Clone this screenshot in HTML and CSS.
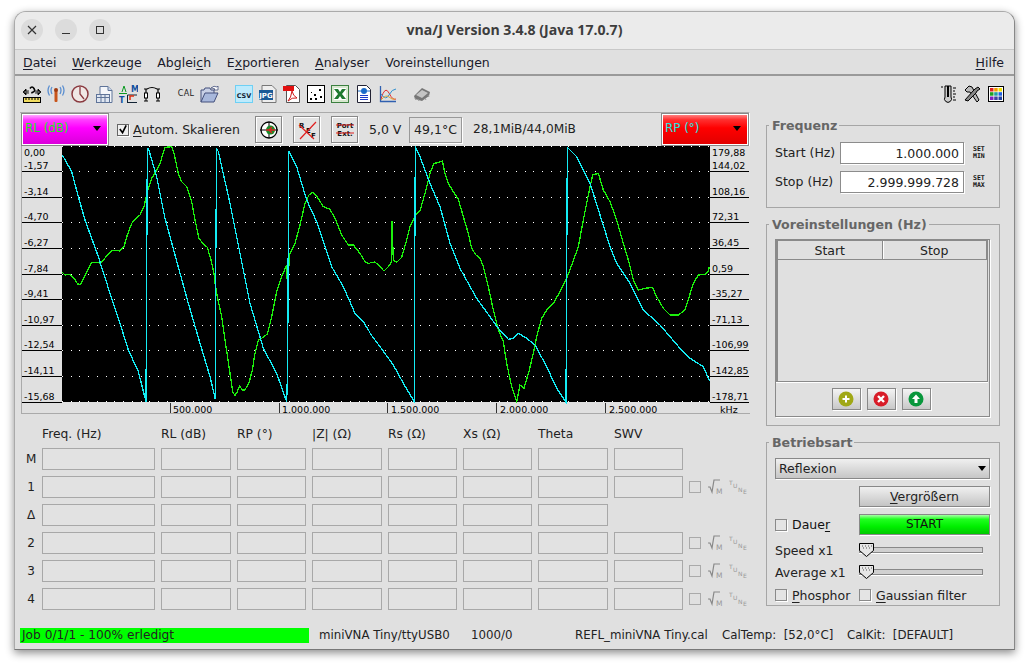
FILE: index.html
```html
<!DOCTYPE html>
<html lang="de">
<head>
<meta charset="utf-8">
<title>vna/J</title>
<link rel="stylesheet" href="styles.css">
</head>
<body>
<div class="window">
  <header class="titlebar">
    <div class="controls">
      <span class="ctl"><svg width="12" height="12" viewBox="0 0 12 12"><path d="M2 2l8 8M10 2l-8 8" stroke="#333" stroke-width="1.2"/></svg></span>
      <span class="ctl"><svg width="12" height="12" viewBox="0 0 12 12"><path d="M2 9.5h8" stroke="#333" stroke-width="1.2"/></svg></span>
      <span class="ctl"><svg width="12" height="12" viewBox="0 0 12 12"><rect x="2.5" y="2.5" width="7" height="7" fill="none" stroke="#333"/></svg></span>
    </div>
    <div class="title">vna/J Version 3.4.8 (Java 17.0.7)</div>
  </header>
  <nav class="menubar">
    <span class="menu"><u>D</u>atei</span>
    <span class="menu"><u>W</u>erkzeuge</span>
    <span class="menu">Abglei<u>c</u>h</span>
    <span class="menu">E<u>x</u>portieren</span>
    <span class="menu"><u>A</u>nalyser</span>
    <span class="menu">Voreinstellungen</span>
    <span class="menu help"><u>H</u>ilfe</span>
  </nav>
  <div class="toolbar">
    <span class="tool"><svg width="20" height="20" viewBox="0 0 20 20"><path d="M1 8l3-3v2h3M1 8l3 3V9h3M19 8l-3-3v2h-3M19 8l-3 3V9h-3" fill="#000" stroke="#000" stroke-width=".8"/><path d="M8 4.500q2-3 4 0t-2 4v1" fill="none" stroke="#000" stroke-width="1.6"/><rect x="1.500" y="13.500" width="17" height="5" fill="#f0dc60" stroke="#000"/><path d="M4 14v2M7 14v2M10 14v2M13 14v2M16 14v2" stroke="#000"/></svg></span>
    <span class="tool"><svg width="20" height="20" viewBox="0 0 20 20"><rect x="8.500" y="6" width="3" height="12" rx="1" fill="#c8541a"/><circle cx="10" cy="6" r="2" fill="#a03a10"/><path d="M6 3q-2 3 0 7M14 3q2 3 0 7M3.500 1.500q-3 5 0 10M16.500 1.500q3 5 0 10" fill="none" stroke="#5b8fd0" stroke-width="1.300"/></svg></span>
    <span class="tool"><svg width="20" height="20" viewBox="0 0 20 20"><circle cx="10" cy="10" r="8" fill="#f0e8e6" stroke="#8a3a40" stroke-width="1.500"/><path d="M10 3v7l4 5" fill="none" stroke="#8a3a40" stroke-width="1.300"/></svg></span>
    <span class="tool"><svg width="20" height="20" viewBox="0 0 20 20"><path d="M6 2.500h8l4 4v12H6z" fill="#f4f6fa" stroke="#5f7499"/><path d="M14 2.500v4h4" fill="#c8d4e6" stroke="#5f7499"/><rect x="2.500" y="10.500" width="13" height="8" fill="#dfe6f1" stroke="#5f7499"/><path d="M2.500 13.500h13M7 10.500v8M11 10.500v8" stroke="#5f7499"/></svg></span>
    <span class="tool"><svg width="20" height="20" viewBox="0 0 20 20"><path d="M4 8l2-6 2 6" fill="none" stroke="#0a9a20"/><path d="M1 9.500h8" stroke="#0a9a20"/><text x="13" y="8" class="lmt lmt-m">M</text><text x="1" y="19" class="lmt lmt-m">T</text><path d="M9.500 19V11H19M9.500 18.500H19" fill="none" stroke="#123"/><path d="M12 16v-4h4" fill="none" stroke="#e03010" stroke-width="1.500"/></svg></span>
    <span class="tool"><svg width="20" height="20" viewBox="0 0 20 20"><path d="M2 5h3M15 5h3M5 5q5-3 10 0" fill="none" stroke="#000" stroke-width="1.200"/><path d="M4 5v4M16 5v4" stroke="#000" stroke-width="1.200"/><rect x="2.500" y="9" width="3" height="5" fill="#fff" stroke="#000"/><rect x="14.500" y="9" width="3" height="5" fill="#fff" stroke="#000"/><path d="M4 14v3M16 14v3M2 17h4M14 17h4" stroke="#000"/></svg></span>
    <span class="spacer"></span>
    <span class="tool cal">CAL</span>
    <span class="tool"><svg width="22" height="20" viewBox="0 0 22 20"><path d="M2 18V6h3l1-2h5l1 2h3v3" fill="#c8d0e6" stroke="#44507c"/><path d="M2 18l4-9h13l-4 9z" fill="#a8b8dc" stroke="#44507c"/><path d="M12 4q3-3 6-1l1-1v4h-4l1-1q-2-1-4-1" fill="#fff" stroke="#44507c" stroke-width=".8"/></svg></span>
    <span class="spacer"></span>
    <span class="tool"><svg width="18" height="18" viewBox="0 0 18 18"><rect width="18" height="18" fill="#6ed0f4"/><rect x="1" y="1" width="16" height="16" fill="#bdeafc"/><text x="9" y="12.500" class="mini">CSV</text></svg></span>
    <span class="tool"><svg width="18" height="18" viewBox="0 0 18 18"><path d="M3 .5h10l4 4v13H3z" fill="#eee" stroke="#777"/><rect x="0" y="5" width="14" height="10" fill="#1a5a96"/><text x="7" y="13" class="mini mini-w">JPG</text></svg></span>
    <span class="tool"><svg width="18" height="18" viewBox="0 0 18 18"><path d="M3.500.5h9l4 4v13h-13z" fill="#fff" stroke="#555"/><rect x="0" y="1" width="11" height="5" fill="#e21010"/><path d="M5 16q3-3 4-10q1 5 5 7q-5-1-9 3z" fill="none" stroke="#d01818"/></svg></span>
    <span class="tool"><svg width="18" height="18" viewBox="0 0 18 18"><rect x=".5" y=".5" width="17" height="17" fill="#fff" stroke="#000"/><path d="M3 13h2v2H3zM7 9h2v2H7zM8 13h2v2H8zM12 4h2v2h-2zM13 11h2v2h-2zM4 7h1v1H4z" fill="#000"/></svg></span>
    <span class="tool"><svg width="18" height="18" viewBox="0 0 18 18"><rect x=".5" y=".5" width="17" height="17" fill="#d8e8d0" stroke="#3c8040"/><rect x="3" y="3" width="12" height="12" fill="#fff"/><path d="M3 4l4 0 2 3 2-3 4 0-4 5 4 5h-4l-2-3-2 3H3l4-5z" fill="#1f7a30"/></svg></span>
    <span class="tool"><svg width="18" height="18" viewBox="0 0 18 18"><path d="M2.500.5h9l4 4v13h-13z" fill="#fff" stroke="#223"/><circle cx="9" cy="6" r="3" fill="#1a6ac8"/><path d="M3 6h3M12 6h3" stroke="#1a6ac8"/><path d="M5 10.500h8M5 12.500h8M5 14.500h8" stroke="#1a3ac8"/></svg></span>
    <span class="tool"><svg width="18" height="18" viewBox="0 0 18 18"><path d="M1.500 1v15.500H17" fill="none" stroke="#3060b0" stroke-width="1.300"/><path d="M2 14q4-14 8-6t7 6" fill="none" stroke="#e03030"/><path d="M2 9q5 7 8 1t7-6" fill="none" stroke="#3090d0"/><path d="M2 15q5-6 8-3t6 2" fill="none" stroke="#e0a030"/></svg></span>
    <span class="spacer"></span>
    <span class="tool"><svg width="20" height="16" viewBox="0 0 20 16"><path d="M2 10l8-8 8 4-1 4-7 5-7-2z" fill="#777"/><path d="M4 9l6-5 6 3-6 5z" fill="#c4c4c4"/><path d="M3 12l1 2M6 13l1 2M13 12l1 2M16 9l1 2" stroke="#999"/></svg></span>
    <span class="tools-right">
      <span class="tool"><svg width="18" height="18" viewBox="0 0 18 18"><path d="M6 1h6v11a3.500 3.500 0 1 1-6 0z" fill="#ccc" stroke="#000"/><path d="M9 1v11" stroke="#000" stroke-width="2"/><path d="M2 2h2M14 3h3M14 6h2M14 9h3M14 12h2M14 15h3" stroke="#000"/></svg></span>
      <span class="tool"><svg width="18" height="18" viewBox="0 0 18 18"><path d="M2 5l4-4 3 1 7 13-2 2L7 7 4 7z" fill="#bbb" stroke="#000"/><path d="M15 2l2 2-3 2-1 2-8 8-3-1 8-9 2-2z" fill="#888" stroke="#000"/></svg></span>
      <span class="tool"><svg width="16" height="16" viewBox="0 0 16 16"><rect x=".5" y=".5" width="15" height="15" fill="#fff" stroke="#000"/><rect x="2" y="2" width="3.500" height="3.500" fill="#e02020"/><rect x="6.200" y="2" width="3.500" height="3.500" fill="#f0a000"/><rect x="10.500" y="2" width="3.500" height="3.500" fill="#f0e000"/><rect x="2" y="6.200" width="3.500" height="3.500" fill="#20a020"/><rect x="6.200" y="6.200" width="3.500" height="3.500" fill="#20a0a0"/><rect x="10.500" y="6.200" width="3.500" height="3.500" fill="#2060e0"/><rect x="2" y="10.500" width="3.500" height="3.500" fill="#8020c0"/><rect x="6.200" y="10.500" width="3.500" height="3.500" fill="#4040a0"/><rect x="10.500" y="10.500" width="3.500" height="3.500" fill="#2040a0"/></svg></span>
    </span>
  </div>

  <div class="main">
    <section class="left">
      <div class="graphbar">
        <div class="combo combo-mag"><span>RL (dB)</span><i class="arrow"></i></div>
        <label class="check autom"><span class="box on"><svg width="11" height="11" viewBox="0 0 11 11"><path d="M2 5l3 4 4-8" fill="none" stroke="#000" stroke-width="1.800"/></svg></span><span><u>A</u>utom. Skalieren</span></label>
        <span class="gbtn"><svg width="20" height="20" viewBox="0 0 20 20"><circle cx="10" cy="10" r="8" fill="#fff" stroke="#000" stroke-width="1.300"/><path d="M1 10h18M10 2v16" stroke="#000"/><circle cx="11.500" cy="10" r="4.500" fill="#1a8a2a"/><path d="M7 10h9M13 7l-3 3 3 3" fill="none" stroke="#e02020" stroke-width="1.300"/></svg></span>
        <span class="gbtn"><svg width="22" height="22" viewBox="0 0 22 22"><text x="3" y="9" class="gt">R</text><text x="10" y="14" class="gt">E</text><text x="15" y="19" class="gt">F</text><path d="M4 20L20 3M3 6l15 14" stroke="#e02020" stroke-width="1.200"/></svg></span>
        <span class="gbtn"><svg width="22" height="22" viewBox="0 0 22 22"><text x="11" y="9" class="gt gt-m">Port</text><text x="11" y="17" class="gt gt-m">Ext.</text><path d="M2 6h18M2 14h18" stroke="#e02020"/></svg></span>
        <span class="volt">5,0 V</span>
        <span class="temp">49,1°C</span>
        <span class="mem">28,1MiB/44,0MiB</span>
        <div class="combo combo-red"><span>RP (°)</span><i class="arrow"></i></div>
      </div>

      <svg class="chart" width="730" height="268" viewBox="20 146 730 268">
        <rect x="62" y="146" width="648" height="256" fill="#000"/>
        <g class="dots">
          <path d="M62 146.500H710M62 171.500H710M62 197.500H710M62 222.500H710M62 248.500H710M62 274.500H710M62 299.500H710M62 325.500H710M62 350.500H710M62 376.500H710M62 401.500H710"/>
        </g>
        <path class="axis" d="M22 171.500H62M22 197.500H62M22 222.500H62M22 248.500H62M22 274.500H62M22 299.500H62M22 325.500H62M22 350.500H62M22 376.500H62M22 402.500H62M710 171.500H749M710 197.500H749M710 222.500H749M710 248.500H749M710 274.500H749M710 299.500H749M710 325.500H749M710 350.500H749M710 376.500H749M710 402.500H749"/>
        <path class="tick" d="M170.500 403V413M279.500 403V413M387.500 403V413M496.500 403V413M605.500 403V413"/>
        <path class="frame" d="M21.500 146V413.500H750"/>
        <g class="yl">
          <text x="24" y="156">0,00</text><text x="24" y="169">-1,57</text><text x="24" y="195">-3,14</text><text x="24" y="220">-4,70</text><text x="24" y="246">-6,27</text><text x="24" y="272">-7,84</text><text x="24" y="297">-9,41</text><text x="24" y="323">-10,97</text><text x="24" y="348">-12,54</text><text x="24" y="374">-14,11</text><text x="24" y="400">-15,68</text>
          <text x="712" y="156">179,88</text><text x="712" y="169">144,02</text><text x="712" y="195">108,16</text><text x="712" y="220">72,31</text><text x="712" y="246">36,45</text><text x="712" y="272">0,59</text><text x="712" y="297">-35,27</text><text x="712" y="323">-71,13</text><text x="712" y="348">-106,99</text><text x="712" y="374">-142,85</text><text x="712" y="400">-178,71</text>
          <text x="173" y="413">500.000</text><text x="282" y="413">1.000.000</text><text x="391" y="413">1.500.000</text><text x="500" y="413">2.000.000</text><text x="609" y="413">2.500.000</text><text x="720" y="413">kHz</text>
        </g>
        <g transform="translate(10 140) scale(.33333)">
          <polyline class="gr" points="157,397 165,405 178,403 190,412 203,432 212,433 222,412 232,392 245,368 262,367 272,370 290,348 305,332 318,331 330,333 342,320 352,285 365,250 378,235 390,225 402,200 412,155 425,115 440,90 450,70 465,22 485,20 492,40 505,100 515,125 530,140 545,185 555,240 567,295 580,312 592,322 603,360 612,400 615,430 622,470 635,530 648,620 660,700 668,755 675,767 682,755 689,738 697,750 705,750 718,725 727,690 735,640 745,600 758,593 772,582 785,530 800,455 815,410 830,375 833,460 838,345 855,310 870,255 885,190 897,165 908,157 920,168 940,200 960,208 975,235 995,285 1015,315 1030,315 1050,340 1065,365 1080,372"/>
          <polyline class="cy" points="157,45 185,95 205,170 225,240 265,350 300,460 330,550 355,630 385,695 408,785 410,408 412,25 415,25 440,110 465,235 495,345 535,490 570,610 600,710 616,778 617,400 620,25 625,35 660,190 690,340 720,490 760,625 800,700 830,785 833,680 836,35 838,35 860,80 890,180 920,245 965,380 1000,440 1035,520 1060,545 1080,578"/>
        </g>
        <g transform="translate(370 140) scale(.33333)">
          <polyline class="gr" points="0,368 15,366 30,380 42,393 55,380 65,365 66,245 68,245 68,305 70,360 80,367 95,352 110,300 120,260 135,228 150,212 165,160 180,100 192,70 205,68 217,63 225,100 235,130 250,155 265,178 280,230 295,280 305,325 318,345 330,355 340,380 355,440 370,510 385,570 400,605 410,670 425,740 440,785 450,735 462,745 478,690 490,640 500,590 515,535 530,510 550,490 570,455 590,415 605,375 625,320 640,240 655,165 668,105 685,100 700,150 720,185 740,240 760,310 775,360 790,420 805,450 825,445 847,442 860,470 880,505 900,525 925,525 945,510 970,430 985,405 1005,403 1015,395 1018,380"/>
          <polyline class="cy" points="0,580 30,620 70,675 100,730 133,785 134,400 136,20 150,50 180,130 210,200 240,310 270,385 320,475 385,565 415,598 430,595 445,580 470,595 495,615 530,680 560,745 588,787 590,400 592,22 620,50 660,130 690,225 720,320 740,370 780,430 820,510 870,555 930,625 960,655 1000,680 1018,722"/>
        </g>
      </svg>

      <div class="marker-grid">
        <span></span><span class="h">Freq. (Hz)</span><span class="h">RL (dB)</span><span class="h">RP (°)</span><span class="h">|Z| (Ω)</span><span class="h">Rs (Ω)</span><span class="h">Xs (Ω)</span><span class="h">Theta</span><span class="h">SWV</span><span></span>

        <span class="r">M</span><i class="f"></i><i class="f"></i><i class="f"></i><i class="f"></i><i class="f"></i><i class="f"></i><i class="f"></i><i class="f"></i><span></span>

        <span class="r">1</span><i class="f"></i><i class="f"></i><i class="f"></i><i class="f"></i><i class="f"></i><i class="f"></i><i class="f"></i><i class="f"></i>
        <span class="acts"><i class="mbox"></i><svg class="sq" width="17" height="16" viewBox="0 0 17 16"><path d="M0 8h2l2 5 2-12h6" fill="none" stroke="#888" stroke-width="1.200"/><text x="8" y="15">M</text></svg><svg class="tune" width="18" height="16" viewBox="0 0 18 16"><text x="0" y="5.500">T</text><text x="4" y="8.500">U</text><text x="9" y="12.500">N</text><text x="14" y="15">E</text></svg></span>

        <span class="r">Δ</span><i class="f"></i><i class="f"></i><i class="f"></i><i class="f"></i><i class="f"></i><i class="f"></i><i class="f"></i><span></span><span></span>

        <span class="r">2</span><i class="f"></i><i class="f"></i><i class="f"></i><i class="f"></i><i class="f"></i><i class="f"></i><i class="f"></i><i class="f"></i>
        <span class="acts"><i class="mbox"></i><svg class="sq" width="17" height="16" viewBox="0 0 17 16"><path d="M0 8h2l2 5 2-12h6" fill="none" stroke="#888" stroke-width="1.200"/><text x="8" y="15">M</text></svg><svg class="tune" width="18" height="16" viewBox="0 0 18 16"><text x="0" y="5.500">T</text><text x="4" y="8.500">U</text><text x="9" y="12.500">N</text><text x="14" y="15">E</text></svg></span>

        <span class="r">3</span><i class="f"></i><i class="f"></i><i class="f"></i><i class="f"></i><i class="f"></i><i class="f"></i><i class="f"></i><i class="f"></i>
        <span class="acts"><i class="mbox"></i><svg class="sq" width="17" height="16" viewBox="0 0 17 16"><path d="M0 8h2l2 5 2-12h6" fill="none" stroke="#888" stroke-width="1.200"/><text x="8" y="15">M</text></svg><svg class="tune" width="18" height="16" viewBox="0 0 18 16"><text x="0" y="5.500">T</text><text x="4" y="8.500">U</text><text x="9" y="12.500">N</text><text x="14" y="15">E</text></svg></span>

        <span class="r">4</span><i class="f"></i><i class="f"></i><i class="f"></i><i class="f"></i><i class="f"></i><i class="f"></i><i class="f"></i><i class="f"></i>
        <span class="acts"><i class="mbox"></i><svg class="sq" width="17" height="16" viewBox="0 0 17 16"><path d="M0 8h2l2 5 2-12h6" fill="none" stroke="#888" stroke-width="1.200"/><text x="8" y="15">M</text></svg><svg class="tune" width="18" height="16" viewBox="0 0 18 16"><text x="0" y="5.500">T</text><text x="4" y="8.500">U</text><text x="9" y="12.500">N</text><text x="14" y="15">E</text></svg></span>
      </div>
    </section>

    <aside class="right">
      <fieldset class="fs fs-freq">
        <legend>Frequenz</legend>
        <div class="freq-row"><span class="freq-l">Start (Hz)</span><span class="input">1.000.000</span><span class="setm">SET<br>MIN</span></div>
        <div class="freq-row"><span class="freq-l">Stop (Hz)</span><span class="input">2.999.999.728</span><span class="setm">SET<br>MAX</span></div>
      </fieldset>
      <fieldset class="fs fs-pre">
        <legend>Voreinstellungen (Hz)</legend>
        <div class="presets">
          <div class="ptable">
            <div class="phead"><span>Start</span><span>Stop</span></div>
          </div>
          <div class="pbtns">
            <span class="pbtn"><svg width="16" height="16" viewBox="0 0 16 16"><circle cx="8" cy="8" r="7.500" fill="#a0a816"/><path d="M8 4.500v7M4.500 8h7" stroke="#fff" stroke-width="2"/></svg></span>
            <span class="pbtn"><svg width="16" height="16" viewBox="0 0 16 16"><circle cx="8" cy="8" r="7.500" fill="#d81c28"/><path d="M5 5l6 6M11 5l-6 6" stroke="#fff" stroke-width="2.400"/></svg></span>
            <span class="pbtn"><svg width="16" height="16" viewBox="0 0 16 16"><circle cx="8" cy="8" r="7.500" fill="#08973c"/><path d="M8 3.500l4 4.500H9.500v4h-3V8H4z" fill="#fff"/></svg></span>
          </div>
        </div>
      </fieldset>
      <fieldset class="fs fs-mode">
        <legend>Betriebsart</legend>
        <div class="select"><span>Reflexion</span><i class="arrow"></i></div>
        <div class="mode-row"><span></span><span class="btn"><u>V</u>ergrößern</span></div>
        <div class="mode-row"><label class="check"><i class="box"></i><span>Daue<u>r</u></span></label><span class="btn btn-start">START</span></div>
        <div class="slider-row slider-first"><span>Speed x1</span><span class="slider"><svg class="thumb" width="16" height="16" viewBox="0 0 16 16"><path d="M.5 1.500h14v7l-7 6-7-6z" fill="#e6e6e6" stroke="#000"/><path d="M3 4h1M6 4h1M9 4h1M12 4h1M4 6h1M7 6h1M10 6h1" stroke="#555"/></svg></span></div>
        <div class="slider-row"><span>Average x1</span><span class="slider"><svg class="thumb" width="16" height="16" viewBox="0 0 16 16"><path d="M.5 1.500h14v7l-7 6-7-6z" fill="#e6e6e6" stroke="#000"/><path d="M3 4h1M6 4h1M9 4h1M12 4h1M4 6h1M7 6h1M10 6h1" stroke="#555"/></svg></span></div>
        <div class="filters"><label class="check"><i class="box"></i><span><u>P</u>hosphor</span></label><label class="check"><i class="box"></i><span><u>G</u>aussian filter</span></label></div>
      </fieldset>
    </aside>
  </div>

  <footer class="status">
    <span class="progress">Job 0/1/1 - 100% erledigt</span>
    <span class="s-dev">miniVNA Tiny/ttyUSB0</span>
    <span class="s-cnt">1000/0</span>
    <span class="s-cal">REFL_miniVNA Tiny.cal</span>
    <span class="s-tmp">CalTemp:&nbsp; [52,0°C]</span>
    <span class="s-kit">CalKit:&nbsp; [DEFAULT]</span>
  </footer>
</div>
</body>
</html>
```
FILE: styles.css
```css
* { box-sizing: border-box; }
html, body { margin: 0; padding: 0; background: #fff; }
body { width: 1028px; height: 666px; overflow: hidden; font: 12px/1.2 "DejaVu Sans", sans-serif; color: #111; }
u { text-decoration: underline; text-underline-offset: 2px; text-decoration-thickness: 1px; }
i { font-style: normal; display: block; }

.window {
  width: 1001px; height: 639px; margin: 11px 0 0 14px;
  background: #e0e0e0; border: 1px solid #aaa; border-bottom-color: #777; border-right-color: #888;
  border-radius: 12px 12px 0 0;
  box-shadow: 0 3px 9px rgba(0,0,0,.45);
  display: flex; flex-direction: column; overflow: hidden;
}
.titlebar {
  height: 38px; flex: none; padding-bottom: 2px; background: #ebebeb; border-bottom: 1px solid #c8c8c8;
  display: flex; align-items: center; position: relative;
}
.controls { display: flex; gap: 12px; padding-left: 6px; }
.ctl { width: 22px; height: 22px; border-radius: 50%; background: #dcdcdc; display: flex; align-items: center; justify-content: center; }
.title { position: absolute; left: 0; right: 0; text-align: center; font: 700 14.100px "Open Sans", sans-serif; color: #3d3d3d; }

.menubar { height: 26px; flex: none; display: flex; align-items: center; padding: 0 10px 0 8px; gap: 15.700px; background: #e0e0e0; border-bottom: 2px solid #9a9a9a; font-size: 12.500px; color: #1a1a2a; }
.menu.help { margin-left: auto; }

.toolbar { height: 36px; flex: none; display: flex; align-items: center; padding-left: 5px; }
.tool { width: 24px; height: 24px; flex: none; display: flex; align-items: center; justify-content: center; }
.spacer { width: 10px; flex: none; }
.cal { font-size: 8px; letter-spacing: .3px; color: #222; }
.tools-right { margin-left: auto; display: flex; padding-right: 6px; }
.lmt { font: 700 8px "DejaVu Sans", sans-serif; }
.lmt-m { fill: #1050a0; }
.mini { font: 700 6.500px "DejaVu Sans", sans-serif; text-anchor: middle; fill: #123; }
.mini-w { fill: #fff; font-size: 7px; }

.main { flex: 1; display: flex; min-height: 0; padding-left: 5px; }
.left { width: 730px; flex: none; }

.graphbar {
  height: 34px; display: flex; align-items: center; border-top: 1px solid #aaa; border-right: 1px solid #fff;
  font-size: 12.500px; color: #222;
}
.combo { width: 88px; height: 33px; flex: none; display: flex; align-items: center; justify-content: space-between; padding: 0 7px 2px 3px; border: 1px solid #888; outline: 1px solid #fff; outline-offset: -2px; font-size: 11.900px; }
.combo-mag { margin-left: 1px; background: linear-gradient(#ffc0ff, #ff40ff 18%, #ff00ff 45%, #d800d8); color: #22e822; }
.combo-red { margin-left: auto; background: linear-gradient(#ff9090, #ff3030 18%, #ff0000 45%, #e00000); color: #20e8e0; }
.arrow { width: 0; height: 0; border-left: 4.500px solid transparent; border-right: 4.500px solid transparent; border-top: 5px solid #000; }
.check { display: flex; align-items: center; gap: 5px; white-space: nowrap; }
.box { width: 12px; height: 12px; flex: none; border: 1px solid #8a8a8a; background: #e4e4e4; box-shadow: 1px 1px 0 #fff; display: block; }
.box.on { border-color: #666; background: #f0f0f0; display: flex; align-items: center; justify-content: center; }
.autom { margin-left: 8px; width: 138px; gap: 4px; }
.gbtn { width: 27px; height: 27px; flex: none; margin-right: 11px; border: 1px solid #888; box-shadow: 1px 1px 0 #fff, inset 1px 1px 0 #fff; background: #e2e2e2; display: flex; align-items: center; justify-content: center; }
.gt { font: 700 7px "DejaVu Sans", sans-serif; fill: #111; }
.gt-m { text-anchor: middle; }
.volt { width: 40px; }
.temp { width: 53px; height: 26px; border: 1px solid #999; box-shadow: 1px 1px 0 #fff; display: flex; align-items: center; justify-content: center; }
.mem { margin-left: 11px; font-size: 12.200px; }

.chart { display: block; }
.dots path { stroke: #fff; stroke-width: 1; stroke-dasharray: 1 7.730; fill: none; shape-rendering: crispEdges; }
.axis { stroke: #000; stroke-width: 1; fill: none; shape-rendering: crispEdges; }
.tick { stroke: #333; stroke-width: 1; shape-rendering: crispEdges; }
.frame { stroke: #aaa; fill: none; shape-rendering: crispEdges; }
.yl text { font: 9.500px "DejaVu Sans", sans-serif; fill: #000; }
.gr, .cy { fill: none; stroke-width: 1.300; vector-effect: non-scaling-stroke; shape-rendering: crispEdges; }
.gr { stroke: #1cf00c; }
.cy { stroke: #14ecf4; }

.marker-grid {
  margin-top: 13px; padding-left: 2px;
  display: grid;
  grid-template-columns: 14px 113px 70px 69px 70px 69px 69px 70px 69px 62px;
  grid-template-rows: 15px repeat(6, 22px);
  gap: 6px;
  align-items: center;
  font-size: 12.300px; color: #222;
}
.marker-grid .h { white-space: nowrap; }
.r { font-size: 12px; text-align: center; margin-left: 4px; }
.f { height: 22px; border: 1px solid #a8a8a8; background: #e2e2e2; }
.acts { display: flex; align-items: center; position: relative; }
.mbox { width: 12px; height: 12px; border: 1px solid #aaa; flex: none; }
.sq { margin-left: 7px; margin-right: 4px; flex: none; }
.sq text { font: 7.500px "DejaVu Sans", sans-serif; fill: #999; }
.tune { flex: none; }
.tune text { font: 6px "DejaVu Sans", sans-serif; fill: #999; }

.right { width: 234px; margin-left: 16px; flex: none; padding-top: 6px; font-size: 12.500px; }
.fs { margin: 0; padding: 0; border: 1px solid #a6a6a6; min-width: 0; position: relative; }
.fs legend { margin-left: -6px; padding: 0 2px 0 3px; font-weight: 700; font-size: 12.600px; color: #666; line-height: 15px; }
.fs-freq { height: 90px; padding: 9px 0 0 8px; }
.freq-row { display: flex; align-items: center; height: 21px; margin-bottom: 8px; }
.freq-l { width: 65px; color: #222; }
.input { width: 124px; height: 22px; background: #fff; border: 1px solid #8c8c8c; box-shadow: 1px 1px 0 #fff; text-align: right; padding: 3px 4px 0 0; color: #222; }
.setm { margin-left: 9px; font: 700 6.500px/7px "DejaVu Sans Mono", monospace; color: #111; text-align: center; }

.fs-pre { height: 209px; margin-top: 9px; padding: 7px 0 0 8px; }
.presets { width: 215px; height: 178px; border: 1px solid #8a8a8a; box-shadow: 1px 1px 0 #fff; display: flex; flex-direction: column; }
.ptable { height: 142px; margin-right: 1px; border: 1px solid #8a8a8a; border-width: 1px 1px 1px 2px; box-shadow: 0 1px 0 #fff; }
.phead { display: flex; height: 19px; border-bottom: 1px solid #8a8a8a; border-right: 1px solid #8a8a8a; color: #222; }
.phead span { flex: 1; text-align: center; padding-top: 2px; }
.phead span:first-child { border-right: 1px solid #8a8a8a; box-shadow: 1px 0 0 #fff; }
.pbtns { flex: 1; display: flex; justify-content: center; align-items: center; gap: 6px; padding-right: 3px; }
.pbtn { width: 29px; height: 22px; border: 1px solid #888; box-shadow: 1px 1px 0 #fff; background: linear-gradient(#f4f4f4, #c8c8c8); display: flex; align-items: center; justify-content: center; }

.fs-mode { height: 171px; margin-top: 9px; padding: 8px 8px 0 8px; }
.select { width: 215px; height: 21px; border: 1px solid #888; box-shadow: 1px 1px 0 #fff; background: linear-gradient(#f0f0f0, #c8c8c8 95%); display: flex; align-items: center; justify-content: space-between; padding: 0 3px 0 3px; color: #222; }
.mode-row { display: grid; grid-template-columns: 84px 131px; align-items: center; height: 21px; margin-top: 7px; }
.btn { height: 21px; border: 1px solid #888; box-shadow: 1px 1px 0 #fff; background: linear-gradient(#f0f0f0, #c4c4c4); text-align: center; color: #222; line-height: 19px; }
.btn-start { background: linear-gradient(#a8ffa8, #20ff20 22%, #00f000 60%, #00c800); font-size: 12px; color: #111; }
.slider-row { display: grid; grid-template-columns: 84px 124px; align-items: center; height: 22px; color: #222; }
.slider-first { margin-top: 4px; }
.slider { display: block; position: relative; height: 6px; border: 1px solid #888; background: #d0d0d0; box-shadow: 0 1px 0 #fff; }
.thumb { position: absolute; left: -1px; top: -6px; }
.filters { display: grid; grid-template-columns: 84px auto; height: 22px; align-items: center; color: #222; margin-top: 1px; }

.status { height: 25px; flex: none; display: flex; align-items: center; padding: 0 0 2px 5px; font-size: 11.800px; color: #222; }
.progress { width: 289px; height: 15px; background: #00ff00; padding-left: 2px; line-height: 15px; font-size: 12.200px; }
.s-dev { margin-left: 10px; width: 152px; }
.s-cnt { width: 104px; }
.s-cal { width: 147px; }
.s-tmp { width: 125px; }
```
